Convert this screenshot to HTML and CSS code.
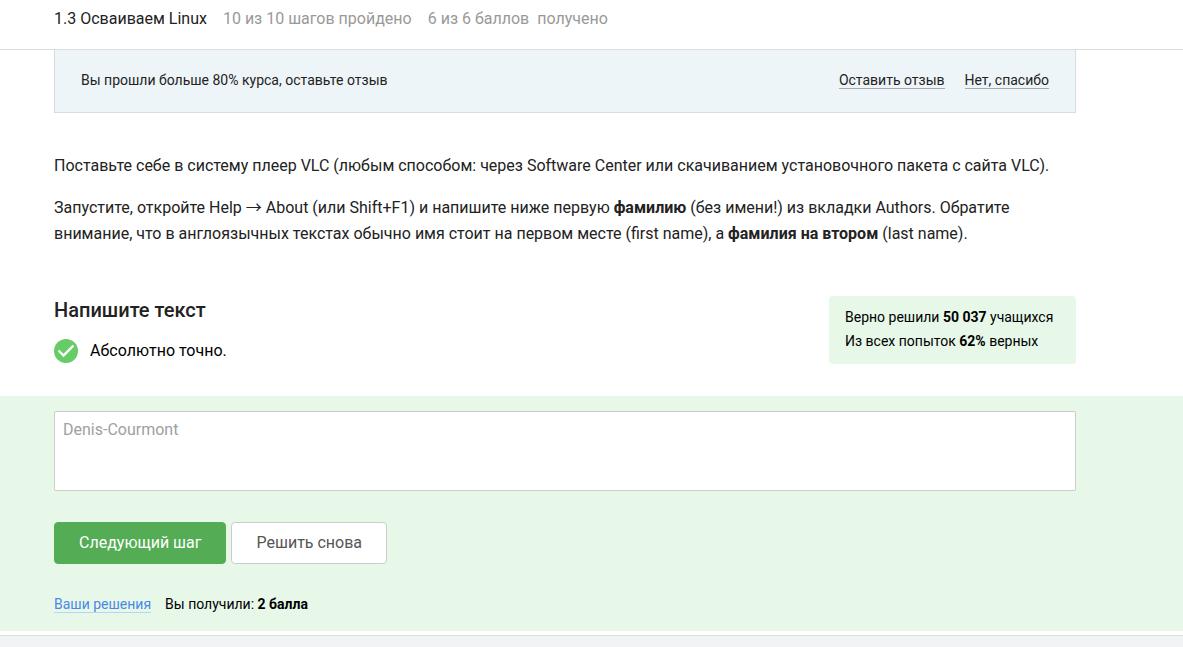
FILE: index.html
```html
<!DOCTYPE html>
<html lang="ru">
<head>
<meta charset="utf-8">
<title>1.3 Осваиваем Linux</title>
<link rel="stylesheet" href="styles.css">
</head>
<body>
<header class="topbar">
  <h1 class="topbar-title">1.3 Осваиваем Linux</h1>
  <span>10 из 10 шагов пройдено</span>
  <span>6 из 6 баллов&nbsp; получено</span>
</header>
<main>
  <div class="column">
    <section class="review">
      <p class="review-text">Вы прошли больше 80% курса, оставьте отзыв</p>
      <a class="review-link" href="#">Оставить отзыв</a>
      <a class="review-link" href="#">Нет, спасибо</a>
    </section>
    <article class="task">
      <p>Поставьте себе в систему плеер VLC (любым способом: через Software Center или скачиванием установочного пакета с сайта VLC).</p>
      <p>Запустите, откройте Help <span class="arrow">→</span> About (или Shift+F1) и напишите ниже первую <b>фамилию</b> (без имени!) из вкладки Authors. Обратите внимание, что в англоязычных текстах обычно имя стоит на первом месте (first name), а <b>фамилия на втором</b> (last name).</p>
    </article>
    <section class="status">
      <div>
        <h2 class="status-title"><label for="answer">Напишите текст</label></h2>
        <p class="verdict">
          <svg class="verdict-icon" viewBox="0 0 24 24" aria-hidden="true"><circle cx="12" cy="12" r="12" fill="#66cc66"/><path d="M4.5 11.5l5 5L19.5 6.5" fill="none" stroke="#fff" stroke-width="2.4"/></svg>
          Абсолютно точно.
        </p>
      </div>
      <div class="stats">
        <p>Верно решили <b>50 037</b> учащихся</p>
        <p>Из всех попыток <b>62%</b> верных</p>
      </div>
    </section>
  </div>
  <section class="attempt">
    <div class="column">
      <textarea class="answer" id="answer" disabled>Denis-Courmont</textarea>
      <div class="actions">
        <button class="button button-primary" type="button">Следующий шаг</button>
        <button class="button" type="button">Решить снова</button>
      </div>
      <div class="result">
        <a class="result-link" href="#">Ваши решения</a>
        <span>Вы получили: <b>2 балла</b></span>
      </div>
    </div>
  </section>
</main>
<footer class="footer"></footer>
</body>
</html>
```

FILE: styles.css
```css
* { box-sizing: border-box; }
body {
  display: flex;
  flex-direction: column;
  min-height: 100vh;
  margin: 0;
  background: #fff;
  color: #222;
  font: 16px/26px Roboto, sans-serif;
}
h1, h2, p { margin: 0; }
b { font-weight: 700; }
.topbar {
  display: flex;
  gap: 16px;
  padding: 6px 54px 17px;
  border-bottom: 1px solid #ddd;
  color: #999;
}
.topbar-title { color: #222; font-size: 16px; font-weight: 400; }
.column { max-width: 1130px; padding: 0 54px; }
.review {
  display: flex;
  gap: 20px;
  align-items: flex-start;
  padding: 22px 26px 23px;
  border: 1px solid #d9dbdc;
  border-top: 0;
  background: #eef5f9;
  font-size: 14px;
  line-height: 16px;
}
.review-text { flex: 1; }
.review-link {
  border-bottom: 1px solid #aaa;
  color: #222;
  text-decoration: none;
}
.task { padding: 40px 0 49px; }
.task p + p { margin-top: 16px; }
.arrow { font-family: "Noto Sans CJK SC", sans-serif; line-height: 1; }
.status {
  display: flex;
  justify-content: space-between;
  align-items: flex-start;
  padding-bottom: 32px;
  color: #000;
}
.status-title { color: #222; font-size: 20px; font-weight: 500; line-height: 28px; }
.verdict { display: flex; align-items: center; gap: 12px; margin-top: 14px; }
.verdict-icon { width: 24px; height: 24px; }
.stats {
  min-width: 247px;
  padding: 9px 16px 11px;
  border-radius: 4px;
  background: #e7f8e9;
  font-size: 14px;
  line-height: 24px;
}
.attempt { padding: 15px 0 18px; background: #e7f8e9; }
.answer {
  display: block;
  width: 100%;
  height: 80px;
  padding: 5px 8px;
  border: 1px solid #ccc;
  border-radius: 2px;
  background: #fff;
  color: #a0a0a0;
  font: inherit;
  resize: none;
}
.actions { display: flex; gap: 5px; margin-top: 31px; }
.button {
  padding: 7px 24px;
  border: 1px solid #ccc;
  border-radius: 4px;
  background: #fff;
  color: #555;
  font: inherit;
}
.button-primary { border-color: #54ad54; background: #54ad54; color: #fff; }
.result { display: flex; gap: 14px; margin-top: 32px; color: #000; font-size: 14px; line-height: 16px; }
.result-link { border-bottom: 1px solid #b5d5f0; color: #4a88e8; text-decoration: none; }
.footer { flex: 1; margin-top: 4px; border-top: 1px solid #ddd; background: #f2f3f5; }
```
